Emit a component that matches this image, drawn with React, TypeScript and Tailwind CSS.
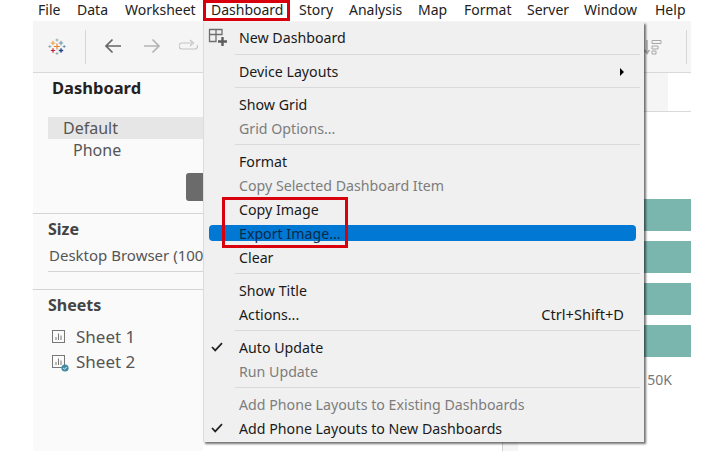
import React from "react";

const font = { fontFamily: '"Noto Sans", "Open Sans", sans-serif' };

const menuBar: [string, string][] = [
  ["File", "ml-[38px] w-[22px]"],
  ["Data", "ml-[17px] w-[31px]"],
  ["Worksheet", "ml-[17px] w-[69px]"],
  ["Dashboard", "ml-[17px] w-[72px]"],
  ["Story", "ml-[16px] w-[34px]"],
  ["Analysis", "ml-[16px] w-[53px]"],
  ["Map", "ml-[16px] w-[30px]"],
  ["Format", "ml-[16px] w-[47px]"],
  ["Server", "ml-[16px] w-[41px]"],
  ["Window", "ml-[16px] w-[55px]"],
  ["Help", "ml-[16px] w-[31px]"],
];

type Row = { t: string; off?: boolean; check?: boolean; right?: string; arrow?: boolean; active?: boolean };
const sections: Row[][] = [
  [{ t: "New Dashboard" }],
  [{ t: "Device Layouts", arrow: true }],
  [{ t: "Show Grid" }, { t: "Grid Options...", off: true }],
  [
    { t: "Format" },
    { t: "Copy Selected Dashboard Item", off: true },
    { t: "Copy Image" },
    { t: "Export Image...", active: true },
    { t: "Clear" },
  ],
  [{ t: "Show Title" }, { t: "Actions...", right: "Ctrl+Shift+D" }],
  [{ t: "Auto Update", check: true }, { t: "Run Update", off: true }],
  [
    { t: "Add Phone Layouts to Existing Dashboards", off: true },
    { t: "Add Phone Layouts to New Dashboards", check: true },
  ],
];

function TableauLogo() {
  const plus = (x: number, y: number, s: number, c: string, w = 1.1) => (
    <path d={`M${x - s} ${y}H${x + s}M${x} ${y - s}V${y + s}`} stroke={c} strokeWidth={w} fill="none" />
  );
  return (
    <svg width="18" height="18" viewBox="0 0 18 18">
      {plus(9, 8.5, 3, "#e8862c", 1.2)}
      {plus(5, 5, 2.2, "#eba04a")}
      {plus(13, 5, 2.2, "#6a94a6")}
      {plus(5, 12.5, 2.2, "#c72035", 1.2)}
      {plus(13, 12.5, 2.2, "#1f447e", 1.3)}
      {plus(9, 2, 1.5, "#8aa9b5", 0.9)}
      {plus(9, 15.5, 1.5, "#8aa9b5", 0.9)}
      {plus(1.8, 8.5, 1.5, "#8aa9b5", 0.9)}
      {plus(16.2, 8.5, 1.5, "#6a94a6", 0.9)}
    </svg>
  );
}

function SheetIcon({ badge }: { badge?: boolean }) {
  return (
    <span className="relative block w-[14px] h-[14px]">
      <svg width="14" height="14" viewBox="0 0 14 14" fill="none" stroke="#777" strokeWidth="1">
        <rect x="0.5" y="0.5" width="12" height="12" />
        <path d="M4 10V7M6.5 10V3.5M9 10V5.5" />
      </svg>
      {badge && (
        <svg className="absolute -right-[3px] -bottom-[3px]" width="8" height="8" viewBox="0 0 8 8">
          <circle cx="4" cy="4" r="3.6" fill="#3f8aa3" />
          <path d="M2.2 4l1.3 1.3 2.3-2.4" stroke="#fff" strokeWidth="0.9" fill="none" />
        </svg>
      )}
    </span>
  );
}

function Check() {
  return (
    <svg width="12" height="10" viewBox="0 0 12 10" fill="none" stroke="#222" strokeWidth="1.7">
      <path d="M1 5l3.2 3.4L11 1.2" />
    </svg>
  );
}

function Menu() {
  return (
    <div className="absolute left-[203px] top-[22px] w-[441px] h-[420px] bg-[#f0f0f0] border-l border-[#dcdcdc] shadow-[2px_2px_2px_rgba(0,0,0,0.55)] pt-[4px]">
      <svg className="absolute left-[4px] top-[6px]" width="20" height="20" viewBox="0 0 20 20" fill="none">
        <path d="M1.5 1.5H14V6.5H8V13.5H1.5Z M8 1.5V6.5H1.5 M8 6.5V13.5" stroke="#6f6f6f" strokeWidth="1.3" />
        <path d="M14.5 9V18M10 13.5H19" stroke="#5d5d5d" strokeWidth="2.4" />
      </svg>
      {sections.map((rows, i) => (
        <div key={i}>
          {i > 0 && (
            <div className={`ml-[31px] mr-[4px] h-px bg-[#d9d9d9] ${i === 1 ? "mt-[4px]" : "mt-[3px]"} mb-[5px]`} />
          )}
          {rows.map((r) => (
            <div key={r.t} className="relative h-[24px] flex items-center pl-[35px] pr-[20px] text-[14.2px] whitespace-nowrap">
              {r.active && (
                <span className="absolute left-[5px] right-[8px] top-[3px] h-[16px] rounded-[4px] bg-[#0078d4]" />
              )}
              {r.check && (
                <span className="absolute left-[7px] top-[6px]">
                  <Check />
                </span>
              )}
              <span className={`relative ${r.off ? "text-[#7d7d7d]" : r.active ? "text-[#0b2a4a]" : "text-[#1a1a1a]"}`}>{r.t}</span>
              {r.right && <span className="ml-auto text-[14.6px] text-[#1a1a1a]">{r.right}</span>}
              {r.arrow && (
                <span className="ml-auto w-0 h-0 border-y-[4px] border-y-transparent border-l-[4px] border-l-black" />
              )}
            </div>
          ))}
        </div>
      ))}
    </div>
  );
}

export default function App() {
  return (
    <div className="relative w-[723px] h-[451px] overflow-hidden bg-white" style={font}>
      {/* Menu bar */}
      <div className="flex items-center h-[21px] pb-[2px] text-[14px] text-[#222] whitespace-nowrap">
        {menuBar.map(([t, c]) => (
          <span key={t} className={c}>
            {t}
          </span>
        ))}
      </div>

      <div className="ml-[33px] w-[658px] h-[430px] flex flex-col">
        {/* Toolbar */}
        <div className="h-[52px] shrink-0 bg-[#f5f5f5] border-b border-[#d9d9d9] flex items-center">
          <span className="ml-[15px]">
            <TableauLogo />
          </span>
          <span className="ml-[19px] w-px h-[34px] bg-[#d6d6d6]" />
          <svg className="ml-[18px] -mt-px" width="18" height="16" viewBox="0 0 18 16" fill="none" stroke="#666" strokeWidth="1.7">
            <path d="M17 8H2M8.5 1.5L2 8l6.5 6.5" />
          </svg>
          <svg className="ml-[21px] -mt-px" width="18" height="16" viewBox="0 0 18 16" fill="none" stroke="#b4b4b4" strokeWidth="1.7">
            <path d="M1 8h15M9.5 1.5L16 8l-6.5 6.5" />
          </svg>
          <svg className="ml-[18px] -mt-px" width="20" height="14" viewBox="0 0 20 14" fill="none" stroke="#c4c4c4" strokeWidth="1.2">
            <path d="M13 4H3a2.5 2.5 0 000 6h13a2.5 2.5 0 002-4M11 1l3.5 3L11 7" />
          </svg>
          <svg className="ml-auto mr-[24px]" width="18" height="16" viewBox="0 0 18 16" fill="none" stroke="#a8a8a8" strokeWidth="1">
            <path d="M3 1v13M0.5 11L3 14.5 5.5 11" strokeWidth="1.4" />
            <path d="M8 1.5h9v3H8zM8 7h6v3H8zM8 12h4v3H8z" />
          </svg>
          <span className="w-px h-[34px] bg-[#d6d6d6] mr-[4px]" />
        </div>

        <div className="flex flex-1 min-h-0">
          {/* Sidebar */}
          <aside className="w-[170px] shrink-0 bg-[#fafafa] flex flex-col overflow-hidden whitespace-nowrap">
            <div className="h-[141px] border-b border-[#d4d4d4] shrink-0 pl-[15px]">
              <div className="pl-[4px] pt-[4px] h-[44px] text-[16.5px] font-bold text-[#222] leading-[22px]">Dashboard</div>
              <div className="h-[22px] bg-[#e6e6e6] pl-[15px] text-[16px] leading-[22px] text-[#555]">Default</div>
              <div className="h-[22px] pl-[25px] text-[16px] leading-[22px] text-[#555]">Phone</div>
              <div className="flex justify-end mt-[12px]">
                <span className="w-[17px] h-[28px] bg-[#6b6b6b] rounded-l-[3px]" />
              </div>
            </div>
            <div className="h-[76px] border-b border-[#d4d4d4] shrink-0 pl-[15px] pt-[4px]">
              <div className="text-[16px] font-bold leading-[22px] text-[#444]">Size</div>
              <div className="h-[32px] border-b border-[#d4d4d4] text-[15px] leading-[26px] pt-[2px] text-[#555] pl-px">Desktop Browser (100</div>
            </div>
            <div className="pl-[15px] pt-[4px]">
              <div className="text-[16px] font-bold leading-[22px] text-[#444]">Sheets</div>
              <div className="mt-[8px] pl-[4px] flex items-center gap-[10px] h-[25px] text-[17px] text-[#555]">
                <SheetIcon />
                Sheet 1
              </div>
              <div className="pl-[4px] flex items-center gap-[10px] h-[25px] text-[17px] text-[#555]">
                <SheetIcon badge />
                Sheet 2
              </div>
            </div>
          </aside>

          {/* Canvas */}
          <main className="flex-1 min-w-0 flex flex-col bg-white">
            <div className="h-[39px] shrink-0 border-b border-[#d9d9d9] flex">
              <span className="w-[465px] bg-[#f5f5f5]" />
            </div>
            <div className="mt-[87px] flex flex-col gap-[10px]">
              <div className="h-[32px] bg-[#7bb6ae]" />
              <div className="h-[32px] bg-[#7bb6ae]" />
              <div className="h-[32px] bg-[#7bb6ae]" />
              <div className="h-[32px] bg-[#7bb6ae]" />
            </div>
            <div className="mt-[14px] text-right pr-[19px] text-[14px] leading-[18px] text-[#777]">50K</div>
            <div className="mt-auto ml-[299px] w-[16px] h-[9px] border-l border-[#d0d0d0] bg-[#f5f5f5]" />
          </main>
        </div>
      </div>

      <Menu />

      {/* Red annotations */}
      <div className="absolute left-[203px] top-0 w-[87px] h-[21px] border-[3px] border-[#d9000d]" />
      <div className="absolute left-[222px] top-[197px] w-[126px] h-[51px] border-[3px] border-[#d9000d]" />
    </div>
  );
}
